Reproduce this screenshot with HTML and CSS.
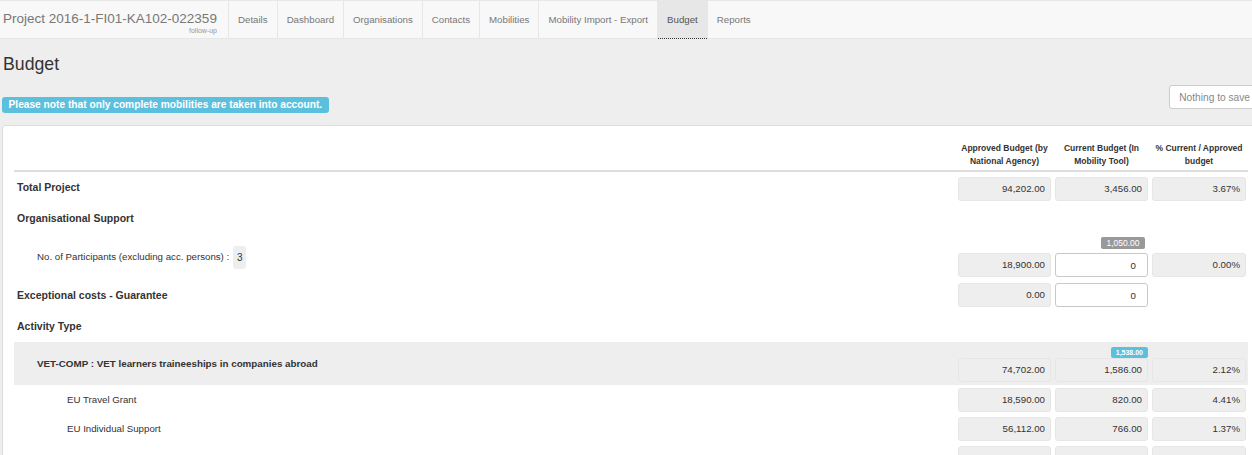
FILE: index.html
```html
<!DOCTYPE html>
<html lang="en">
<head>
    <meta charset="UTF-8">
    <title>Budget - Mobility Tool</title>
    <link rel="stylesheet" href="styles.css">
</head>
<body>
    <nav class="navbar">
        <div class="brand">
            <div class="brand-title">Project 2016-1-FI01-KA102-022359</div>
            <div class="brand-sub">follow-up</div>
        </div>
        <ul class="nav-tabs">
            <li><a href="#">Details</a></li>
            <li><a href="#">Dashboard</a></li>
            <li><a href="#">Organisations</a></li>
            <li><a href="#">Contacts</a></li>
            <li><a href="#">Mobilities</a></li>
            <li><a href="#">Mobility Import - Export</a></li>
            <li class="active"><a href="#">Budget</a></li>
            <li><a href="#">Reports</a></li>
        </ul>
    </nav>

    <main class="content">
        <h2 class="page-title">Budget</h2>

        <div class="toolbar">
            <span class="label-info">Please note that only complete mobilities are taken into account.</span>
            <button class="save-btn" type="button">Nothing to save</button>
        </div>

        <div class="panel">
            <!-- en-têtes -->
            <div class="budget-row budget-head">
                <div></div>
                <div class="head-cell">Approved Budget (by National Agency)</div>
                <div class="head-cell">Current Budget (In Mobility Tool)</div>
                <div class="head-cell">% Current / Approved budget</div>
            </div>

            <div class="budget-row row-total">
                <div class="row-label strong label-top">Total Project</div>
                <div class="amount">94,202.00</div>
                <div class="amount">3,456.00</div>
                <div class="amount">3.67%</div>
            </div>

            <div class="section-title">Organisational Support</div>

            <div class="budget-row row-participants">
                <div class="row-label level-1">No. of Participants (excluding acc. persons) : <span class="count">3</span></div>
                <div class="amount">18,900.00</div>
                <div class="stack">
                    <span class="badge badge-grey">1,050.00</span>
                    <input class="amount-input" type="text" value="0">
                </div>
                <div class="amount">0.00%</div>
            </div>

            <div class="budget-row row-exceptional">
                <div class="row-label strong">Exceptional costs - Guarantee</div>
                <div class="amount">0.00</div>
                <input class="amount-input" type="text" value="0">
                <div></div>
            </div>

            <div class="section-title section-spaced">Activity Type</div>

            <div class="budget-row row-group">
                <div class="row-label group-label level-1">VET-COMP : VET learners traineeships in companies abroad</div>
                <div class="amount">74,702.00</div>
                <div class="stack stack-tight">
                    <span class="badge badge-blue">1,538.00</span>
                    <div class="amount">1,586.00</div>
                </div>
                <div class="amount">2.12%</div>
            </div>

            <div class="budget-row row-after-group">
                <div class="row-label level-2">EU Travel Grant</div>
                <div class="amount">18,590.00</div>
                <div class="amount">820.00</div>
                <div class="amount">4.41%</div>
            </div>

            <div class="budget-row">
                <div class="row-label level-2">EU Individual Support</div>
                <div class="amount">56,112.00</div>
                <div class="amount">766.00</div>
                <div class="amount">1.37%</div>
            </div>

            <div class="budget-row">
                <div class="row-label level-2"></div>
                <div class="amount">0.00</div>
                <div class="amount">0.00</div>
                <div class="amount">0.00%</div>
            </div>
        </div>
    </main>
</body>
</html>
```

FILE: styles.css
```css
html, body {
    margin: 0;
    overflow: hidden;
}
body {
    background: #eeeeee;
    color: #333;
    font-family: "Liberation Sans", Arial, sans-serif;
}

/* barre de navigation */
.navbar {
    display: flex;
    height: 37px;
    background: #f8f8f8;
    border-top: 1px solid #e7e7e7;
    border-bottom: 1px solid #e7e7e7;
}
.brand {
    width: 229px;
    box-sizing: border-box;
    padding: 10px 11px 0 3px;
    border-right: 1px solid #e7e7e7;
    text-align: right;
}
.brand-title {
    text-align: left;
    font-size: 13.5px;
    line-height: 15px;
    color: #777;
    white-space: nowrap;
}
.brand-sub {
    font-size: 7px;
    line-height: 9px;
    color: #999;
}
.nav-tabs {
    display: flex;
    margin: 0;
    padding: 0;
    list-style: none;
}
.nav-tabs li {
    border-right: 1px solid #e7e7e7;
}
.nav-tabs li:last-child {
    border-right: none;
}
.nav-tabs a {
    display: block;
    padding: 0 9px;
    line-height: 37px;
    font-size: 9.7px;
    color: #777;
    text-decoration: none;
}
.nav-tabs li.active a {
    background: #e7e7e7;
    color: #555;
    border-bottom: 1px dotted #333;
}

/* contenu */
.content {
    width: 1258px;
    padding: 0 2px;
}
.page-title {
    margin: 15px 0 0 1px;
    font-size: 17.7px;
    line-height: 20px;
    font-weight: normal;
    color: #333;
}
.toolbar {
    display: flex;
    justify-content: space-between;
    align-items: flex-start;
    margin-top: 11px;
}
.label-info {
    margin-top: 12px;
    height: 16px;
    line-height: 16px;
    padding: 0 6.5px;
    border-radius: 3px;
    background: #5bc0de;
    color: #fff;
    font-size: 10.2px;
    font-weight: bold;
}
.save-btn {
    height: 24px;
    padding: 0 9px;
    background: #fff;
    border: 1px solid #ccc;
    border-radius: 3px;
    color: #888;
    font-family: inherit;
    font-size: 10.2px;
}
.panel {
    margin-top: 12px;
    padding: 0 11px 20px;
    background: #fff;
    border: 1px solid #ddd;
    border-radius: 3px;
}

/* tableau du budget */
.budget-row {
    display: grid;
    grid-template-columns: 1fr 93px 93px 94px;
    column-gap: 4px;
    align-items: center;
    padding-right: 2px;
    margin-top: 5px;
}
.budget-head {
    margin-top: 0;
    padding-top: 16px;
    padding-bottom: 2px;
    align-items: end;
    border-bottom: 2px solid #ddd;
}
.head-cell {
    text-align: center;
    font-size: 8.5px;
    line-height: 13px;
    font-weight: bold;
}
.row-label {
    padding-left: 3px;
    font-size: 9.7px;
    line-height: 20px;
}
.row-label.strong {
    font-size: 10.5px;
    font-weight: bold;
}
.row-label.group-label {
    font-size: 9.8px;
    font-weight: bold;
}
.label-top {
    align-self: start;
}
.level-1 {
    padding-left: 23px;
}
.level-2 {
    padding-left: 53px;
}
.section-title {
    padding: 7px 0 0 3px;
    font-size: 10.5px;
    line-height: 20px;
    font-weight: bold;
}
.section-spaced {
    padding-top: 9px;
}
.count {
    display: inline-block;
    margin-left: 1px;
    padding: 0 4px;
    height: 23px;
    line-height: 23px;
    font-size: 10px;
    background: #eee;
    border-radius: 3px;
    vertical-align: middle;
}
.amount {
    height: 24px;
    box-sizing: border-box;
    padding-right: 5px;
    border: 1px solid #e6e6e6;
    border-radius: 3px;
    background: #eee;
    text-align: right;
    font-size: 9.7px;
    line-height: 22px;
}
.amount-input {
    width: 100%;
    height: 24px;
    box-sizing: border-box;
    margin: 0;
    padding: 0 11px 0 0;
    border: 1px solid #c8c8c8;
    border-radius: 3px;
    background: #fff;
    color: #333;
    text-align: right;
    font-family: inherit;
    font-size: 9.7px;
}
.stack {
    display: flex;
    flex-direction: column;
    align-items: flex-end;
    gap: 4px;
}
.stack-tight {
    gap: 0;
}
.stack .amount {
    align-self: stretch;
}
.badge {
    color: #fff;
    border-radius: 2px;
    white-space: nowrap;
}
.badge-grey {
    margin-right: 3px;
    padding: 0 5.5px;
    height: 12px;
    line-height: 12px;
    font-size: 8.5px;
    background: #999;
}
.badge-blue {
    padding: 0 5px;
    height: 11px;
    line-height: 11px;
    font-size: 7px;
    font-weight: bold;
    background: #5bc0de;
}
.row-participants {
    margin-top: 9px;
    align-items: end;
}
.row-participants .row-label {
    align-self: center;
}
.row-exceptional {
    margin-top: 6px;
}
.row-group {
    margin-top: 6px;
    padding-top: 5px;
    padding-bottom: 3px;
    background: #eee;
    align-items: end;
}
.row-group .row-label {
    align-self: center;
    margin-bottom: 2px;
}
.row-after-group {
    margin-top: 3px;
}
```
